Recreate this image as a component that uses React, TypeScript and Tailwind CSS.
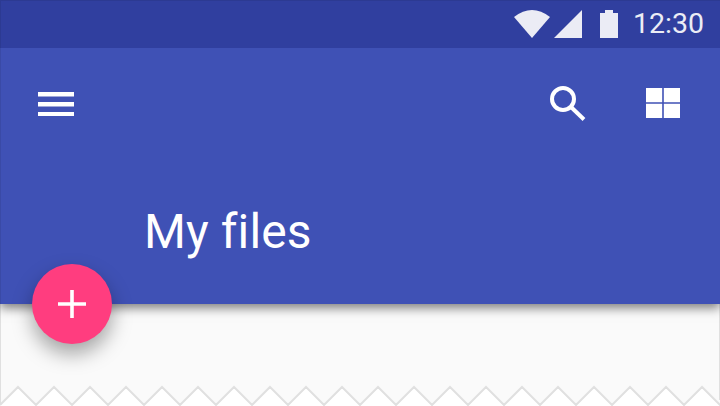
export default function App() {
  const zig = Array.from({ length: 22 }, (_, i) => `${i * 36},405 ${i * 36 + 18},387`).join(" ");
  return (
    <div className="relative flex h-[406px] w-[720px] flex-col overflow-hidden bg-[#fafafa] font-['Roboto',sans-serif]">
      <header className="relative z-10 flex h-[304px] flex-col bg-[#3f51b5] shadow-[0_4px_10px_rgba(0,0,0,0.5),inset_1px_0_rgba(0,0,0,0.08)]">
        <div className="flex h-12 items-center justify-end bg-[#303f9f] pr-4 shadow-[inset_1px_1px_rgba(0,0,0,0.08)]">
          <svg width="36" height="28" viewBox="0 0 36 28">
            <path d="M0 7 Q18 -7 36 7 L18 28 Z" fill="#ebecf5" />
          </svg>
          <svg width="28" height="28" viewBox="0 0 28 28" className="ml-1">
            <path d="M0 28 L28 0 V28 Z" fill="#ebecf5" />
          </svg>
          <svg width="18" height="28" viewBox="0 0 18 28" className="ml-[18px]">
            <path d="M0 3 H5 V0 H13 V3 H18 V28 H0 Z" fill="#ebecf5" />
          </svg>
          <span className="ml-[15.5px] text-[28.5px] leading-none text-[#ebecf5]">12:30</span>
        </div>
        <div className="flex h-[112px] items-center justify-between pl-[38px] pr-[40px]">
          <svg width="36" height="24" viewBox="0 0 36 24">
            <path d="M0 0H36V4.4H0ZM0 10H36V14.4H0ZM0 20H36V24.4H0Z" fill="#fff" />
          </svg>
          <div className="flex items-center gap-[60px]">
            <svg width="36" height="36" viewBox="0 0 36 36" fill="none" stroke="#fff">
              <circle cx="13" cy="13" r="11" strokeWidth="4" />
              <path d="M21 21 L34 33.5" strokeWidth="4" />
            </svg>
            <svg width="34" height="32" viewBox="0 0 34 32" fill="#fff">
              <path d="M0 0H16.2V14.2H0ZM17.8 0H34V14.2H17.8ZM0 15.8H16.2V30H0ZM17.8 15.8H34V30H17.8Z" />
            </svg>
          </div>
        </div>
        <h1 className="pl-[144px] pt-[42px] text-[48px] font-normal leading-[60px] tracking-[0.1px] text-white [font-variant-ligatures:none]">My files</h1>
      </header>
      <button className="absolute left-8 top-[264px] z-20 flex h-20 w-20 items-center justify-center rounded-full bg-[#ff3d7f] shadow-[0_10px_20px_rgba(0,0,0,0.35)]">
        <svg width="28" height="28" viewBox="0 0 28 28">
          <path d="M12.2 0H15.8V28H12.2ZM0 12.2H28V15.8H0Z" fill="#fff" />
        </svg>
      </button>
      <svg width="720" height="406" viewBox="0 0 720 406" className="absolute left-0 top-0">
        <path d="M0.5 304V404" stroke="#e0e0e0" fill="none" />
        <path d="M719.5 304V400" stroke="#e0e0e0" fill="none" />
        <polygon points={`0,420 ${zig} 800,420`} fill="#ffffff" />
        <polyline points={zig} fill="none" stroke="#e0e0e0" strokeWidth="2" />
      </svg>
    </div>
  );
}
